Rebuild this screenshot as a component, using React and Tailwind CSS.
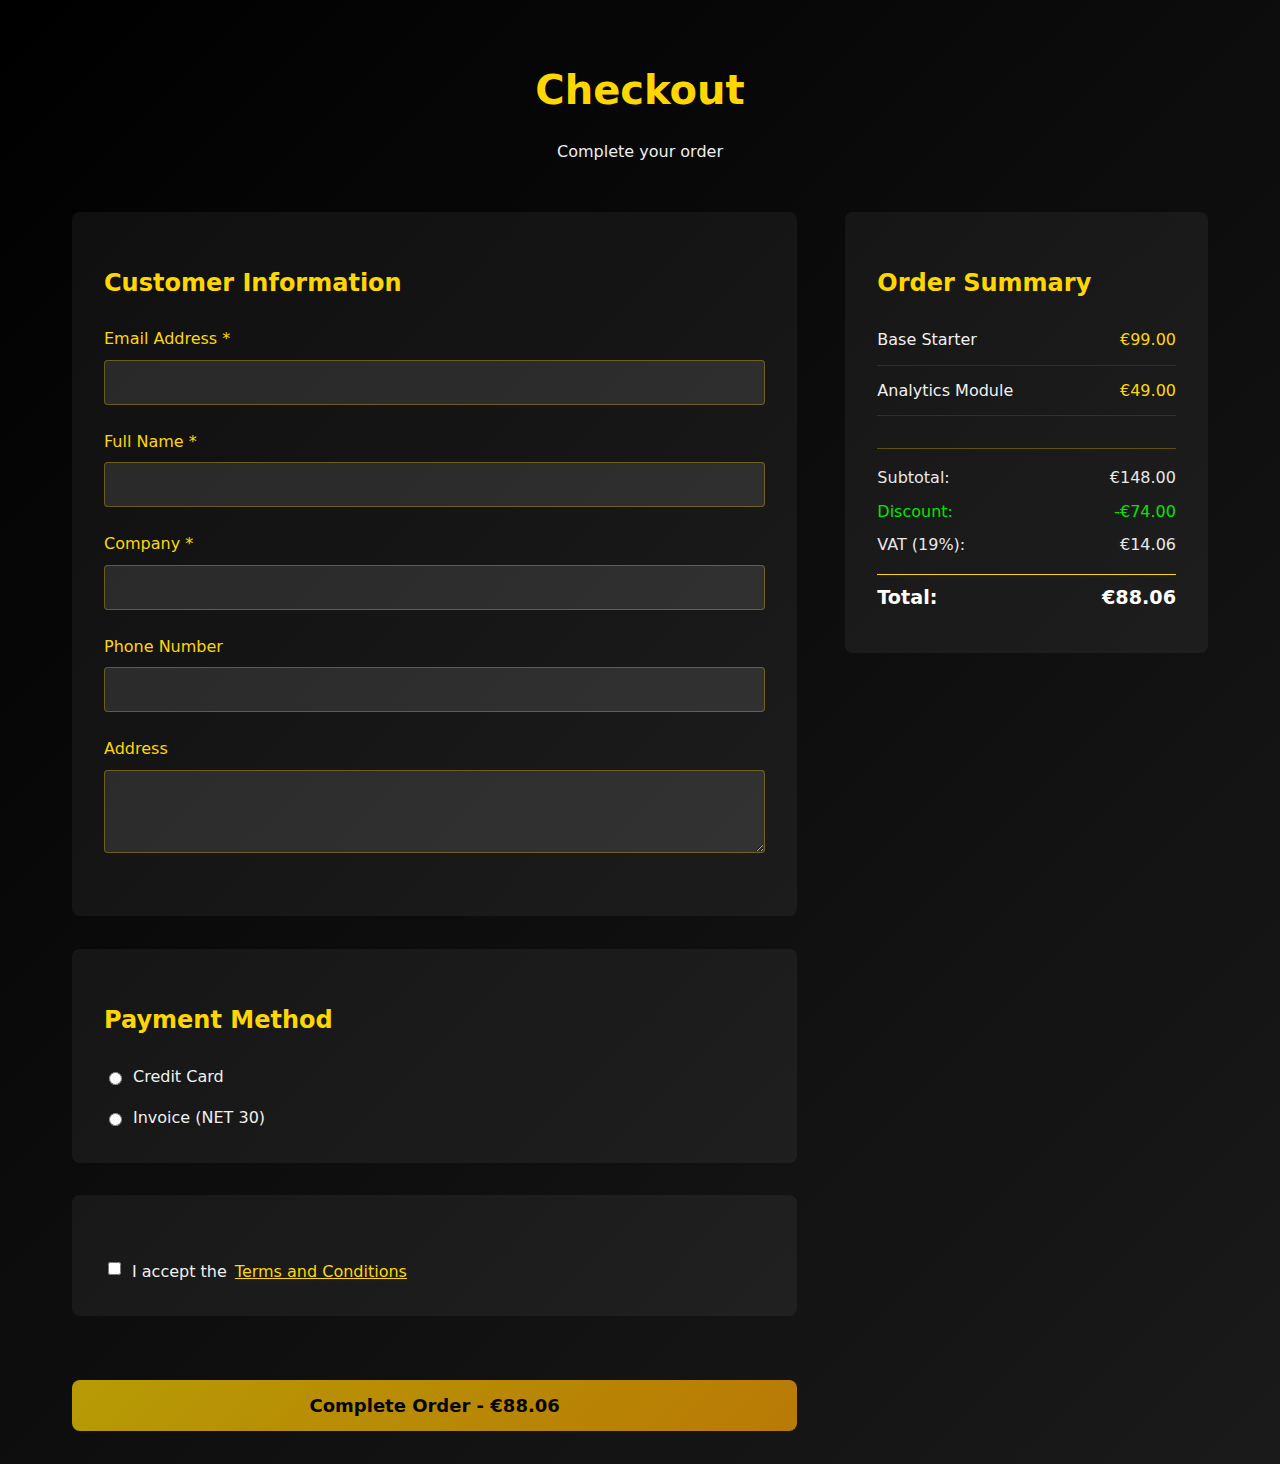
const Field = ({ label, textarea }) => (
  <div className="mb-6">
    <label className="block mb-2 text-[#ffd700]">{label}</label>
    {textarea ? (
      <textarea className="block w-full h-[83px] rounded border border-[#ffd700]/30 bg-white/10 px-3 py-2 text-white outline-none" />
    ) : (
      <input
        type="text"
        className="block w-full h-[45px] rounded border border-[#ffd700]/30 bg-white/10 px-3 text-white outline-none"
      />
    )}
  </div>
);

const items = [
  { name: "Base Starter", price: "€99.00" },
  { name: "Analytics Module", price: "€49.00" },
];

export default function App() {
  return (
    <div className="min-h-screen bg-[linear-gradient(135deg,#000000_0%,#1a1a1a_100%)] font-['DejaVu_Sans',sans-serif] leading-[1.6] text-[#e8e8e8]">
      <div className="mx-auto max-w-[1200px] px-8 pt-[58px] pb-[33px]">
        <header className="text-center mb-[47px]">
          <h1 className="text-[40px] font-bold text-[#ffd700] leading-[1.6] mb-[17px]">Checkout</h1>
          <p className="text-[#eeeeee]">Complete your order</p>
        </header>

        <div className="grid grid-cols-[2fr_1fr] gap-12 items-start">
          <div className="flex flex-col">
            <section className="rounded-lg bg-white/5 px-8 pt-[52px] pb-[39px]">
              <h2 className="text-2xl font-bold text-[#ffd700] leading-[1.6] mb-6">Customer Information</h2>
              <Field label="Email Address *" />
              <Field label="Full Name *" />
              <Field label="Company *" />
              <Field label="Phone Number" />
              <Field label="Address" textarea />
            </section>

            <section className="mt-[33px] rounded-lg bg-white/5 px-8 pt-[52px] pb-8">
              <h2 className="text-2xl font-bold text-[#ffd700] leading-[1.6] mb-[25px]">Payment Method</h2>
              <div className="flex flex-col gap-[15px]">
                <label className="flex items-center">
                  <input type="radio" name="pay" className="ml-[5px] mr-[11px] mt-[3px] w-[13px] h-[13px]" />
                  <span className="text-[#f0f0f0]">Credit Card</span>
                </label>
                <label className="flex items-center">
                  <input type="radio" name="pay" className="ml-[5px] mr-[11px] mt-[3px] w-[13px] h-[13px]" />
                  <span className="text-[#f0f0f0]">Invoice (NET 30)</span>
                </label>
              </div>
            </section>

            <section className="mt-8 rounded-lg bg-white/5 px-8 pt-[64px] pb-[32px]">
              <label className="flex items-center">
                <input type="checkbox" className="ml-1 mr-[11px] mb-[5px] w-[13px] h-[13px]" />
                <span className="text-[#f0f0f0]">I accept the</span>
                <a href="#" className="ml-2 text-[#ffd700] underline">Terms and Conditions</a>
              </label>
            </section>

            <button className="mt-16 h-[51px] w-full rounded-lg bg-[linear-gradient(135deg,#ffd700_0%,#ffa500_100%)] opacity-70 text-lg font-bold text-black">
              Complete Order - €88.06
            </button>
          </div>

          <aside className="rounded-lg bg-white/5 px-8 pt-[52px] pb-[39px]">
            <h2 className="text-2xl font-bold text-[#ffd700] leading-[1.6] mb-[13px]">Order Summary</h2>
            {items.map((it) => (
              <div key={it.name} className="flex justify-between py-3 border-b border-white/10">
                <span className="text-[#f0f0f0]">{it.name}</span>
                <span className="text-[#ffd700]">{it.price}</span>
              </div>
            ))}
            <div className="mt-8 border-t border-[#ffd700]/30 pt-4">
              <div className="flex justify-between mb-2">
                <span>Subtotal:</span>
                <span>€148.00</span>
              </div>
              <div className="flex justify-between mb-2 text-[#00e600]">
                <span>Discount:</span>
                <span>-€74.00</span>
              </div>
              <div className="flex justify-between">
                <span>VAT (19%):</span>
                <span>€14.06</span>
              </div>
              <div className="mt-4 border-t border-[#ffd700] pt-2 flex justify-between text-[19.2px] font-bold text-white">
                <span>Total:</span>
                <span>€88.06</span>
              </div>
            </div>
          </aside>
        </div>
      </div>
    </div>
  );
}
